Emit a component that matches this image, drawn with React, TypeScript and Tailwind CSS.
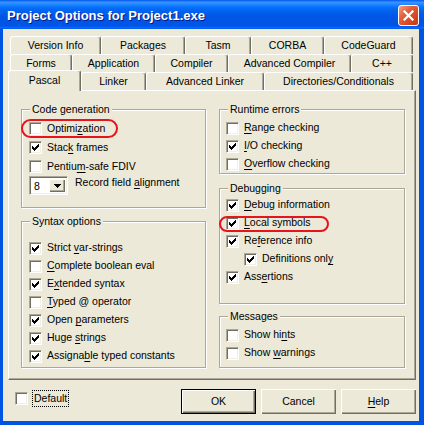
import React from 'react';

type Item = { label: string; checked?: boolean; indent?: boolean; mark?: string };

const codeGen: Item[] = [
  { label: 'Optimi&zation', mark: '-left-[8px] top-0 w-[97px] h-[19px]' },
  { label: 'Stac&k frames', checked: true },
  { label: 'Pentiu&m-safe FDIV' },
];

const syntax: Item[] = [
  { label: 'Strict &var-strings', checked: true },
  { label: '&Complete boolean eval' },
  { label: 'E&xtended syntax', checked: true },
  { label: '&Typed @ operator' },
  { label: 'Open &parameters', checked: true },
  { label: 'Huge &strings', checked: true },
  { label: 'Assigna&ble typed constants', checked: true },
];

const runtime: Item[] = [
  { label: '&Range checking' },
  { label: '&I/O checking', checked: true },
  { label: '&Overflow checking' },
];

const debugging: Item[] = [
  { label: '&Debug information', checked: true },
  { label: '&Local symbols', checked: true, mark: '-left-[7px] top-[2px] w-[110px] h-[16px]' },
  { label: 'Re&ference info', checked: true },
  { label: 'Definitions onl&y', checked: true, indent: true },
  { label: 'Ass&ertions', checked: true },
];

const messages: Item[] = [
  { label: 'Show hi&nts' },
  { label: 'Show &warnings' },
];

const row1 = [
  { label: 'Version Info', w: 'w-[91px]' },
  { label: 'Packages', w: 'w-[84px]' },
  { label: 'Tasm', w: 'w-[66px]' },
  { label: 'CORBA', w: 'w-[73px]' },
  { label: 'CodeGuard', w: 'w-[89px]' },
];

const row2 = [
  { label: 'Forms', w: 'w-[62px]' },
  { label: 'Application', w: 'w-[83px]' },
  { label: 'Compiler', w: 'w-[73px]' },
  { label: 'Advanced Compiler', w: 'w-[123px]' },
  { label: 'C++', w: 'w-[62px]' },
];

const row3 = [
  { label: 'Linker', w: 'w-[65px]' },
  { label: 'Advanced Linker', w: 'w-[118px]' },
  { label: 'Directories/Conditionals', w: 'w-[149px]' },
];

// '&' marks the accelerator letter, like a Delphi caption
const Amp = ({ text }: { text: string }) => {
  const i = text.indexOf('&');
  if (i < 0) return <>{text}</>;
  return (
    <>
      {text.slice(0, i)}
      <span className="underline underline-offset-[2px]">{text[i + 1]}</span>
      {text.slice(i + 2)}
    </>
  );
};

const CheckBox = ({ checked }: { checked?: boolean }) => (
  <span className="relative block w-[13px] h-[13px] shrink-0 bg-white border border-t-[#aca899] border-l-[#aca899] border-b-white border-r-white shadow-[inset_1px_1px_0_#716f64,inset_-1px_-1px_0_#f1efe2]">
    {checked && (
      <svg width="11" height="11" viewBox="0 0 11 11" className="absolute left-0 top-0" shapeRendering="crispEdges">
        <rect x="2" y="4" width="1" height="3" fill="#000" />
        <rect x="3" y="5" width="1" height="3" fill="#000" />
        <rect x="4" y="6" width="1" height="3" fill="#000" />
        <rect x="5" y="5" width="1" height="3" fill="#000" />
        <rect x="6" y="4" width="1" height="3" fill="#000" />
        <rect x="7" y="3" width="1" height="3" fill="#000" />
        <rect x="8" y="2" width="1" height="3" fill="#000" />
      </svg>
    )}
  </span>
);

const CheckRow = ({ item, h = 'h-[18px]' }: { item: Item; h?: string }) => (
  <div className={`relative flex items-center gap-[5px] ${h} ${item.indent ? 'pl-[18px]' : ''}`}>
    <CheckBox checked={item.checked} />
    <span className="whitespace-nowrap">
      <Amp text={item.label} />
    </span>
    {item.mark && (
      <span className={`absolute pointer-events-none rounded-full border-2 border-[#e8141b] ${item.mark}`} />
    )}
  </div>
);

const Group = ({ title, className, children }: { title: string; className: string; children: React.ReactNode }) => (
  <div className={`relative shrink-0 border border-[#aca899] shadow-[inset_1px_1px_0_#fff,1px_1px_0_#fff] ${className}`}>
    <span className="absolute -top-[8px] left-[8px] px-[2px] bg-[#ece9d8] leading-[14px] whitespace-nowrap">{title}</span>
    {children}
  </div>
);

const Tab = ({ label, w }: { label: string; w: string }) => (
  <div className={`${w} h-full flex items-center justify-center border-t border-l border-r border-t-white border-l-white border-r-[#716f64] rounded-t-[3px] shadow-[inset_-1px_0_0_#aca899] bg-[#ece9d8] whitespace-nowrap`}>
    {label}
  </div>
);

const Button = ({ label, def }: { label: string; def?: boolean }) => (
  <div
    className={`w-[75px] h-[25px] flex items-center justify-center bg-[#ece9d8] ${
      def
        ? 'border border-black shadow-[inset_1px_1px_0_#fff,inset_-1px_-1px_0_#716f64,inset_-2px_-2px_0_#aca899]'
        : 'shadow-[inset_1px_1px_0_#fff,inset_-1px_-1px_0_#716f64,inset_-2px_-2px_0_#aca899]'
    }`}
  >
    <Amp text={label} />
  </div>
);

export default function App() {
  return (
    <div className="w-[424px] h-[425px] flex flex-col bg-[#0054e3] font-['Liberation_Sans',Arial,sans-serif] text-[10.5px] text-black select-none">
      {/* Title bar */}
      <div className="h-[29px] shrink-0 flex items-start pl-[7px] pr-[5px] bg-[linear-gradient(180deg,#0058ee_0%,#3a93ff_8%,#288eff_12%,#127dff_20%,#036ffc_26%,#0262ee_38%,#0057e5_54%,#0054e3_86%,#0055eb_89%,#005bf5_92%,#026afe_95%,#0062ef_98%,#0052d6_100%)]">
        <span className="flex-1 mt-[7px] text-white font-bold text-[13px] leading-[17px] [text-shadow:1px_1px_0_#0a1883] whitespace-nowrap">
          Project Options for Project1.exe
        </span>
        <div className="mt-[5px] w-[21px] h-[21px] rounded-[3px] border border-white bg-[linear-gradient(135deg,#f3a184_0%,#e5613b_35%,#d9471f_70%,#c23a1b_100%)] flex items-center justify-center">
          <svg width="11" height="11" viewBox="0 0 11 11">
            <path d="M1.5 1.5 L9.5 9.5 M9.5 1.5 L1.5 9.5" stroke="#fff" strokeWidth="2.2" strokeLinecap="square" />
          </svg>
        </div>
      </div>

      {/* Client area */}
      <div className="flex-1 ml-[3px] mr-[5px] mb-[4px] bg-[#ece9d8] pl-[5px] pt-[7px] flex flex-col">
        {/* Tab rows */}
        <div className="flex h-[18px] ml-[2px]">
          {row1.map((t) => (
            <Tab key={t.label} label={t.label} w={t.w} />
          ))}
        </div>
        <div className="flex h-[18px] ml-[2px]">
          {row2.map((t) => (
            <Tab key={t.label} label={t.label} w={t.w} />
          ))}
        </div>
        <div className="relative z-10 flex h-[18px]">
          <div className="w-[73px] h-[21px] -mt-[2px] self-start flex items-start pt-[2px] justify-center border-t border-l border-r border-t-white border-l-white border-r-[#716f64] rounded-t-[3px] shadow-[inset_-1px_0_0_#aca899] bg-[#ece9d8]">
            Pascal
          </div>
          {row3.map((t) => (
            <Tab key={t.label} label={t.label} w={t.w} />
          ))}
        </div>

        {/* Tab sheet */}
        <div className="w-[408px] h-[290px] shrink-0 flex gap-[13px] pl-[12px] pt-[18px] border border-t-white border-l-white border-r-[#716f64] border-b-[#716f64] shadow-[inset_-1px_-1px_0_#aca899]">
          <div className="w-[185px] flex flex-col gap-[13px]">
            <Group title="Code generation" className="h-[99px] pt-[9px] pl-[7px]">
              {codeGen.map((it) => (
                <CheckRow key={it.label} item={it} h="h-[19px]" />
              ))}
              <div className="flex items-center gap-[7px] h-[19px]">
                <div className="flex w-[39px] h-[19px] bg-white border border-t-[#aca899] border-l-[#aca899] border-b-white border-r-white shadow-[inset_1px_1px_0_#716f64,inset_-1px_-1px_0_#f1efe2] p-[2px]">
                  <span className="flex-1 pl-[2px] leading-[14px]">8</span>
                  <span className="w-[16px] h-full flex items-center justify-center bg-[#ece9d8] shadow-[inset_1px_1px_0_#fff,inset_-1px_-1px_0_#716f64,inset_-2px_-2px_0_#aca899]">
                    <svg width="7" height="4" viewBox="0 0 7 4" shapeRendering="crispEdges">
                      <path d="M0 0 H7 L3.5 4 Z" fill="#000" />
                    </svg>
                  </span>
                </div>
                <span className="mb-[5px] whitespace-nowrap">
                  <Amp text="Record field &alignment" />
                </span>
              </div>
            </Group>
            <Group title="Syntax options" className="h-[147px] pt-[17px] pl-[7px]">
              {syntax.map((it) => (
                <CheckRow key={it.label} item={it} />
              ))}
            </Group>
          </div>

          <div className="w-[186px] flex flex-col">
            <Group title="Runtime errors" className="h-[65px] pt-[9px] pl-[6px]">
              {runtime.map((it) => (
                <CheckRow key={it.label} item={it} />
              ))}
            </Group>
            <Group title="Debugging" className="mt-[14px] h-[116px] pt-[7px] pl-[6px]">
              {debugging.map((it) => (
                <CheckRow key={it.label} item={it} />
              ))}
            </Group>
            <Group title="Messages" className="mt-[12px] h-[52px] pt-[9px] pl-[6px]">
              {messages.map((it) => (
                <CheckRow key={it.label} item={it} />
              ))}
            </Group>
          </div>
        </div>

        {/* Bottom bar */}
        <div className="w-[408px] mt-[9px] flex items-start">
          <div className="ml-[7px] mt-[1px] flex items-center gap-[4px]">
            <CheckBox />
            <span className="h-[17px] px-[1px] leading-[15px] border border-dotted border-black">Default</span>
          </div>
          <div className="ml-auto flex gap-[5px]">
            <Button label="OK" def />
            <Button label="Cancel" />
            <Button label="&Help" />
          </div>
        </div>
      </div>
    </div>
  );
}
